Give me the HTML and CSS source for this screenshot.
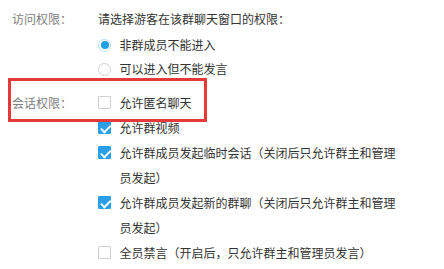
FILE: index.html
```html
<!DOCTYPE html>
<html lang="zh-CN">
<head>
<meta charset="utf-8">
<link rel="stylesheet" href="styles.css">
</head>
<body>
<div class="page">
  <section class="row">
    <div class="label">访问权限：</div>
    <div class="content">
      <div class="title">请选择游客在该群聊天窗口的权限：</div>
      <ul class="opts radios">
        <li class="opt"><span class="radio on"></span><span class="text">非群成员不能进入</span></li>
        <li class="opt"><span class="radio"></span><span class="text">可以进入但不能发言</span></li>
      </ul>
    </div>
  </section>
  <section class="row chat">
    <div class="label">会话权限：</div>
    <div class="content">
      <ul class="opts checks">
        <li class="opt"><span class="check"></span><span class="text">允许匿名聊天</span></li>
        <li class="opt"><span class="check on"></span><span class="text">允许群视频</span></li>
        <li class="opt"><span class="check on"></span><span class="text">允许群成员发起临时会话（关闭后只允许群主和管理员发起）</span></li>
        <li class="opt"><span class="check on"></span><span class="text">允许群成员发起新的群聊（关闭后只允许群主和管理员发起）</span></li>
        <li class="opt"><span class="check"></span><span class="text">全员禁言（开启后，只允许群主和管理员发言）</span></li>
      </ul>
    </div>
  </section>
  <div class="highlight"></div>
</div>
</body>
</html>
```
FILE: styles.css
```css
* { box-sizing: border-box; }
html, body { margin: 0; padding: 0; background: #fff; }
body {
  font-family: "Noto Sans CJK SC", "Noto Sans", sans-serif;
  font-size: 12px;
  color: #333;
}
.page {
  position: relative;
  width: 444px;
  height: 269px;
  overflow: hidden;
  padding: 7px 0 0 12px;
}
.row {
  display: grid;
  grid-template-columns: 86px 1fr;
}
.label {
  color: #808080;
  line-height: 24px;
}
.chat .label { line-height: 25px; }
.title { line-height: 24px; }
.opts {
  list-style: none;
  margin: 0;
  padding: 0;
}
.radios { margin-top: 2px; }
.radios .opt { line-height: 24px; }
.chat { margin-top: 9px; }
.checks .opt { line-height: 25px; }
.opt {
  display: flex;
  align-items: flex-start;
}
.text {
  width: 282px;
  margin-left: 8.5px;
}
.radio, .check {
  flex: none;
  width: 13px;
  height: 13px;
  background: #fff;
  position: relative;
}
.radios .radio { margin-top: 5.5px; }
.checks .check { margin-top: 6px; }
.radio {
  border: 1px solid #d2d2d2;
  border-radius: 50%;
}
.radio.on {
  border-color: #b9dcf5;
}
.radio.on::after {
  content: "";
  position: absolute;
  left: 1.5px;
  top: 1.5px;
  width: 8px;
  height: 8px;
  border-radius: 50%;
  background: #1f9de6;
}
.check {
  border: 1px solid #cfcfcf;
  border-radius: 1px;
}
.check.on {
  background: #2a9fe7;
  border-color: #2a9fe7;
}
.check.on::after {
  content: "";
  position: absolute;
  left: 3.5px;
  top: 0.5px;
  width: 4px;
  height: 7.5px;
  border-right: 2px solid #fff;
  border-bottom: 2px solid #fff;
  transform: rotate(45deg);
}
.highlight {
  position: absolute;
  left: 8px;
  top: 78px;
  width: 199px;
  height: 44px;
  border: 3px solid #e5393b;
}
```
